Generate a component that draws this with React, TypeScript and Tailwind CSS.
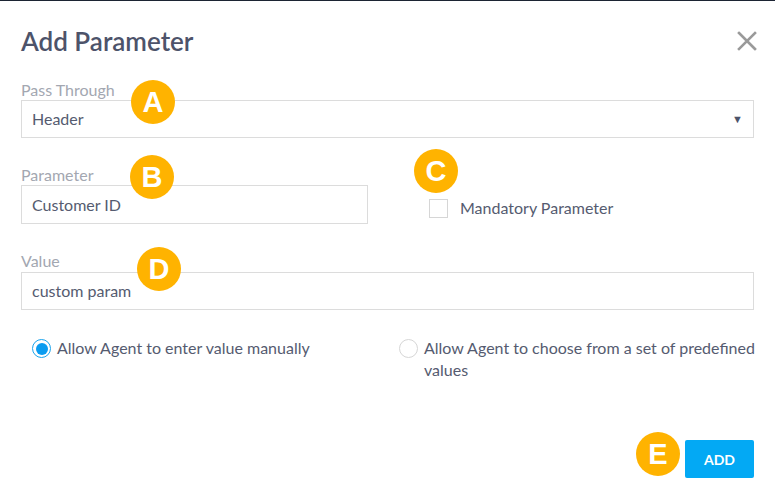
import React, { useState } from 'react';

const Badge = ({ letter, className }: { letter: string; className: string }) => (
  <span
    className={`absolute flex h-[44px] w-[44px] items-center justify-center rounded-full bg-[#ffb300] text-[29px] font-bold leading-none text-white ${className}`}
    style={{ fontFamily: 'Arial, "Liberation Sans", sans-serif' }}
  >
    {letter}
  </span>
);

export default function App() {
  const [mode, setMode] = useState<'manual' | 'predefined'>('manual');
  const [mandatory, setMandatory] = useState(false);

  return (
    <div
      className="relative h-[503px] w-full overflow-hidden border-t border-[#1c2433] bg-white px-[21px] text-[16px] text-[#555b70]"
      style={{ fontFamily: 'Lato, "Noto Sans", sans-serif' }}
    >
      {/* Header */}
      <div className="flex items-center justify-between pt-[24px]">
        <h2 className="text-[26px] font-semibold leading-[32px] text-[#4d536a]">Add Parameter</h2>
        <button className="mr-[-4px] text-[#9a9a9a]">
          <svg width="22" height="22" viewBox="0 0 22 22" stroke="currentColor" strokeWidth="2.6" strokeLinecap="square">
            <path d="M3 3 L19 19 M19 3 L3 19" />
          </svg>
        </button>
      </div>

      {/* Pass Through */}
      <div className="mt-[24px]">
        <label className="block leading-[18px] text-[#a3a7b1]">Pass Through</label>
        <div className="mt-[1px] flex h-[38px] items-center justify-between border border-[#dcdcdc] pl-[10px] pr-[10px]">
          <span>Header</span>
          <span className="text-[11px] text-[#4d536a]">▼</span>
        </div>
      </div>

      {/* Parameter + Mandatory */}
      <div className="mt-[28px] grid grid-cols-[347px_1fr] gap-[20px]">
        <div>
          <label className="block leading-[18px] text-[#a3a7b1]">Parameter</label>
          <div className="mt-[1px] flex h-[39px] items-center border border-[#dcdcdc] pl-[10px]">Customer ID</div>
        </div>
        <div className="flex items-end pb-[4px] pl-[41px]">
          <label className="flex cursor-pointer items-center gap-[12px]" onClick={() => setMandatory(!mandatory)}>
            <span className="h-[19px] w-[19px] border border-[#d6d6d6] bg-white" />
            <span>Mandatory Parameter</span>
          </label>
        </div>
      </div>

      {/* Value */}
      <div className="mt-[28px]">
        <label className="block leading-[18px] text-[#a3a7b1]">Value</label>
        <div className="mt-[2px] flex h-[38px] items-center border border-[#dcdcdc] pl-[10px]">custom param</div>
      </div>

      {/* Radios */}
      <div className="mt-[27px] grid grid-cols-[347px_1fr] gap-[20px]">
        <label className="flex cursor-pointer items-start gap-[6px] pl-[11px]" onClick={() => setMode('manual')}>
          <Radio checked={mode === 'manual'} />
          <span className="leading-[22px]">Allow Agent to enter value manually</span>
        </label>
        <label className="mr-[-14px] flex cursor-pointer items-start gap-[6px] pl-[11px]" onClick={() => setMode('predefined')}>
          <Radio checked={mode === 'predefined'} />
          <span className="leading-[22px]">Allow Agent to choose from a set of predefined values</span>
        </label>
      </div>

      {/* Footer */}
      <div className="mt-[59px] flex justify-end">
        <button className="h-[38px] w-[69px] rounded-[2px] bg-[#03a9f4] text-[14px] font-bold text-white">ADD</button>
      </div>

      <Badge letter="A" className="left-[131px] top-[79px]" />
      <Badge letter="B" className="left-[130px] top-[154px]" />
      <Badge letter="C" className="left-[414px] top-[148px]" />
      <Badge letter="D" className="left-[137px] top-[246px]" />
      <Badge letter="E" className="left-[636px] top-[431px]" />
    </div>
  );
}

function Radio({ checked }: { checked: boolean }) {
  return (
    <span
      className={`mt-[2px] flex h-[19px] w-[19px] shrink-0 items-center justify-center rounded-full border ${
        checked ? 'border-[#1aa3ec]' : 'border-[#d6d6d6]'
      }`}
    >
      {checked && <span className="h-[12px] w-[12px] rounded-full bg-[#0a9cf0]" />}
    </span>
  );
}
